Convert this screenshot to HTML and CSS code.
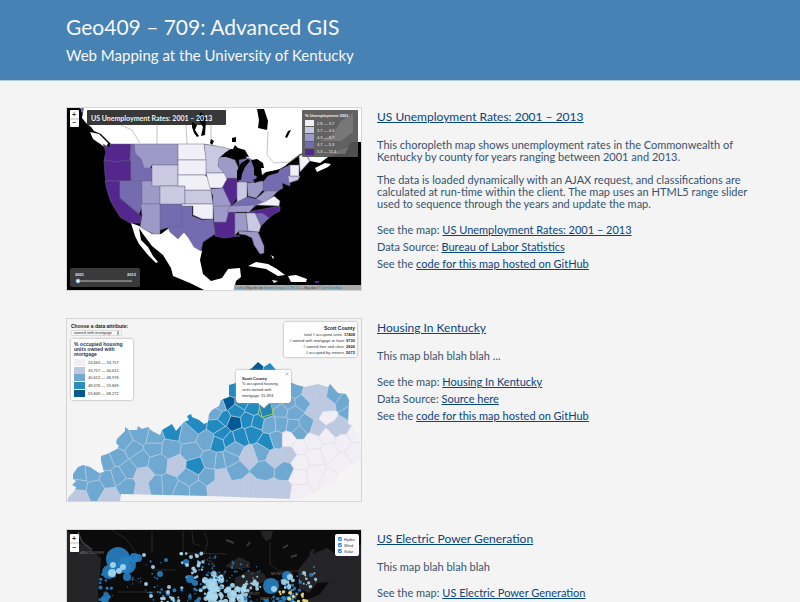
FILE: index.html
```html
<!DOCTYPE html>
<html lang="en">
<head>
<meta charset="utf-8">
<meta name="viewport" content="width=device-width, initial-scale=1">
<title>Geo409 – 709: Advanced GIS</title>
<link rel="stylesheet" href="styles.css">
</head>
<body>
<header class="site-header">
  <h1>Geo409 – 709: Advanced GIS</h1>
  <h2>Web Mapping at the University of Kentucky</h2>
</header>
<main class="projects">
  <article class="project">
    <svg class="thumb" viewBox="67 108 294 182" role="img" aria-label="US unemployment map">
      <rect x="67" y="108" width="294" height="182" fill="#000"/>
      <path fill="#fff" d="M80 108L83 112 82 118 86 123 91 127 94 131 101 134 107 140 111 144H204L216 146 222 152 231 149 239 150 245 155 248 160 254 163 261 167 262 175 266 172 278 170 285 166 292 160 300 154 306 153 310 161 320 163 328 157 338 153 346 149 352 142 361 142V108Z"/>
      <path fill="#fff" d="M315 168L325 163 331 164 328 167 317 172ZM131 223L142 227 152 234 161 234 169 228 178 237 184 232 195 245 202 251 200 260 203 274 211 281 222 278 228 269 240 268 241 277 236 281 234 290H204L190 283 173 276 171 268 163 255 152 246 143 234 139 228 141 240 148 247 153 256 158 262 156 263 148 255 139 244 135 236Z"/>
      <path fill="#fff" d="M248 266L256 262 268 264 277 269 285 275 278 276 266 269 254 267ZM288 276L296 275 307 279 306 282 291 282ZM272 280l6 1-4 2zM270 248l5 1zM271 255l3 2-1 2z"/>
      <path d="M81 108h3l-1 5-2-1z" fill="#756bb1"/>
      <path fill="#fff" d="M90 132l9 2 9 9-2 5-13-9z"/>
      <path fill="none" stroke="#aaa" stroke-width=".7" d="M121 125L132 130 140 143M157 125V144M186 125L187 144M211 125V143M268 131L267 155 274 163 290 162 302 153"/>
      <path d="M257 109l7 0 4 12-1 9-9-2 1-8zM288 131l3-1-4 8-2-1zM232 138l4-1 0 5-4 0zM211 139l3 2-2 4-2-2z"/>
      <g stroke="#686484" stroke-width=".5" stroke-linejoin="round">
        <g fill="#54278f">
          <path d="M103 144l7 4V144H131V160L115 162 104 160 106 152Z"/>
          <path d="M104 160L115 162 131 160V181H106L105 175Z"/>
          <path d="M105 181H120V198L141 216 140 223 130 223 120 217 111 202 107 190Z"/>
          <path d="M224 178H237V197L232 205 228 203 223 190Z"/>
          <path d="M214 222H225L227 212H235V235L240 236 224 238 215 236Z"/>
          <path d="M247 212L280 206 280 211 274 214 268 219 260 214Z"/>
        </g>
        <g fill="#756bb1">
          <path d="M131 144H134L135 152 141 159 144 167 152 168V181H131V162L130 159Z"/>
          <path d="M120 181H142V207L139 214 120 198Z"/>
          <path d="M160 204H182V227L166 228 160 230Z"/>
          <path d="M182 206H192V216L202 220 213 219 215 234 203 242 201 251 194 247 188 237 184 232 178 239 170 232 168 227H182Z"/>
          <path d="M239 160L249 158 256 163 255 173 257 177 254 182H239L238 176 240 168Z"/>
          <path d="M263 182L268 176 276 173 279 170 290 165V186L282 183 283 188 278 191H263Z"/>
          <path d="M232 206L238 200 248 197 256 199 264 194 265 202 254 206Z"/>
          <path d="M254 214L262 213 269 218 261 226Z"/>
        </g>
        <g fill="#9e9ac8">
          <path d="M134 144H178V165H152L150 168H144L141 159 135 153Z"/>
          <path d="M142 181H152V185H160V204H142Z"/>
          <path d="M141 204H160V234H153L140 227 142 216Z"/>
          <path d="M210 189L223 188 231 205 229 209H213V196Z"/>
          <path d="M213 206H230L226 222H214Z"/>
          <path d="M218 158L224 156 235 160 239 169 237 178H224L218 169Z"/>
          <path d="M247 183L263 181 263 190 256 198 248 196Z"/>
          <path d="M230 206L256 205 249 212H227Z"/>
          <path d="M235 213H246L248 231H239L235 235Z"/>
          <path d="M239 231L258 232 264 246 264 253 260 254 254 245 252 238 246 235 239 234Z"/>
          <path d="M256 199L265 191 278 191 273 196 265 203Z"/>
        </g>
        <g fill="#cbc9e2">
          <path d="M152 165H178V186H152Z"/><path d="M160 186H185V204H160Z"/>
          <path d="M185 190H211L213 204H185Z"/>
          <path d="M204 144L222 147 230 149 219 158 218 166 224 173H206Z"/>
          <path d="M237 182H247V197L237 202Z"/><path d="M246 213H255L261 226 259 232 248 231Z"/>
          <path d="M288 176H300L298 180 289 183Z"/>
        </g>
        <g fill="#f2f0f7">
          <path d="M178 144H204L206 160H178Z"/><path d="M178 160H206V175L178 175Z"/>
          <path d="M178 175H205L210 180 211 190H185V186H178Z"/><path d="M206 173H224L227 179 222 188H210Z"/>
          <path d="M182 204H213V219L202 219 193 215V206H182Z"/><path d="M256 205L266 201 274 196 280 201 279 206Z"/>
          <path d="M290 165H299V176H290Z"/><path d="M299 156L305 153 310 161 300 172Z"/>
        </g>
      </g>
      <path d="M221 157l5-5 6-1 3-6 3 3 7 2 4 7-8-1-6 3-8-2zM237 180l0-9 4-8 7-4 2 2-5 6-3 7-1 6zM251 160l6-1 6 4 1 5-4 0-2 9-4-2 0-7zM253 180l6-3 9-1-7 4-6 3zM266 173l10-3 4-1-2 4-10 2z"/>
      <path d="M315 281h4v2h-4z" fill="#54278f"/>
      <rect x="87" y="110" width="139" height="15" rx="1" fill="#383838"/>
      <path d="M192 122l5 3-2 5 4 6-2 1-3-4-2-6zM201 112l5 7-1 16-4 1 2-9-5-8z"/>
      <text x="91" y="121" class="map-title">US Unemployment Rates: 2001 – 2013</text>
      <g class="zoomer"><rect x="70" y="110" width="9" height="17" rx="1"/><path d="M70 119h9"/><text x="74" y="117">+</text><text x="74" y="125">−</text></g>
      <rect x="302" y="110" width="56" height="47" rx="1" fill="#555" fill-opacity=".93"/>
      <path fill="#858585" fill-opacity=".6" d="M320 141l13-7 8-13 12-8v19l-12 9-10 0zM331 154l18-7-4 7z"/>
      <text x="305" y="117" class="legend-title small light">% Unemployment 2001</text>
      <g class="legend light">
        <path fill="#f2f0f7" d="M305 120h9v6h-9z"/><path fill="#cbc9e2" d="M305 127h9v6h-9z"/><path fill="#9e9ac8" d="M305 134h9v7h-9z"/><path fill="#756bb1" d="M305 142h9v6h-9z"/><path fill="#54278f" d="M305 149h9v6h-9z"/>
        <text x="317" y="125">2.8 — 3.7</text><text x="317" y="132">3.7 — 4.3</text><text x="317" y="139">4.3 — 4.7</text><text x="317" y="146">4.7 — 5.3</text><text x="317" y="153">5.3 — 11.4</text>
      </g>
      <rect x="70" y="268" width="70" height="19" rx="2" fill="#3a3a3a"/>
      <g class="legend-title small light"><text x="75" y="276">2001</text><text x="127" y="276">2013</text></g>
      <path d="M78 281h54" stroke="#bbb"/><circle cx="78" cy="281" r="2" fill="#fff" stroke="#66a8e8"/>
      <rect x="234" y="285" width="127" height="5" fill="#aaa"/>
      <text x="235" y="289" class="credit"><tspan>Leaflet</tspan> | Map tiles by <tspan>Stamen Design</tspan>, <tspan>CC BY 3.0</tspan> — Map data © <tspan>OpenStreetMap</tspan></text>
    </svg>
    <div class="details">
      <h3><a href="#unemployment">US Unemployment Rates: 2001 – 2013</a></h3>
      <p>This choropleth map shows unemployment rates in the Commonwealth of Kentucky by county for years ranging between 2001 and 2013.</p>
      <p>The data is loaded dynamically with an AJAX request, and classifications are calculated at run-time within the client. The map uses an HTML5 range slider used to sequence through the years and update the map.</p>
      <ul>
        <li>See the map: <a href="#unemployment">US Unemployment Rates: 2001 – 2013</a></li>
        <li>Data Source: <a href="#bls">Bureau of Labor Statistics</a></li>
        <li>See the <a href="#code-1">code for this map hosted on GitHub</a></li>
      </ul>
    </div>
  </article>

  <article class="project">
    <svg class="thumb" viewBox="67 319 294 182" role="img" aria-label="Kentucky housing map">
      <rect x="67" y="319" width="294" height="182" fill="#f4f4f4"/>
      <clipPath id="state"><path d="M68 501V498L75 490 76 487 72 485 76 481 73 479 73 474 78 467 83 465 90 467 99 473 104 472 101 461 101 456 107 454 109 453 117 449 119 446 116 443 117 439 125 431 125 427 129 430 137 430 138 426 142 429 148 427 152 431 160 435 162 430 172 424 176 431 184 422 189 420 187 416 191 414 192 417 199 420 204 424 208 422 209 414 212 410 219 406 221 400 229 397 229 385 236 383 240 376 252 368 258 362 264 367 270 363 276 370 285 380 297 385 305 387 318 384 328 387 330 384 338 393 346 394 349 400 348 424 353 426 356 433 360 440 361 460 350 464 337 475 336 482 320 489 303 498 293 499 210 496 121 494 120 501Z"/></clipPath>
      <g id="counties" clip-path="url(#state)"></g>
      <path d="M259 405L271 403 273 414 262 417Z" fill="#2586b5" stroke="#a0cf3c"/>
      <text x="71" y="328" class="legend-title">Choose a data attribute:</text>
      <rect x="71.500" y="330.500" width="50" height="5" rx="1" fill="#f8f8f8" stroke="#ccc" stroke-width=".7"/>
      <g class="legend"><text x="74" y="334">owned with mortgage</text></g>
      <path d="M117 332.500l1-1.500 1 1.500zM117 333.500l1 1.500 1-1.500z" fill="#333"/>
      <rect x="71" y="339" width="62" height="61" rx="2" class="card"/>
      <g class="legend-title navy"><text x="74" y="346">% occupied housing</text><text x="74" y="351">units owned with</text><text x="74" y="356">mortgage</text></g>
      <g class="legend">
        <path fill="#f1eef6" d="M74 359h11v7H74z"/><path fill="#bdc9e1" d="M74 367h11v7H74z"/><path fill="#74a9cf" d="M74 374h11v7H74z"/><path fill="#2b8cbe" d="M74 382h11v7H74z"/><path fill="#045a8d" d="M74 390h11v7H74z"/>
        <text x="88" y="364">24,663 — 33,757</text><text x="88" y="372">33,757 — 40,612</text><text x="88" y="379">40,612 — 48,976</text><text x="88" y="387">48,976 — 59,849</text><text x="88" y="395">59,849 — 68,272</text>
      </g>
      <rect x="284" y="322" width="73" height="35" rx="2" class="card"/>
      <g class="legend end"><text x="355" y="330" class="legend-title">Scott County</text><text x="355" y="336">total # occupied units: <tspan>17408</tspan></text><text x="355" y="342"># owned with mortgage or loan: <tspan>9730</tspan></text><text x="355" y="348"># owned free and clear: <tspan>2606</tspan></text><text x="355" y="354"># occupied by renters: <tspan>5072</tspan></text></g>
      <path d="M238 370H289Q291 370 291 373V399Q291 403 288 403H269L264 408 258 403H239Q236 403 236 399V373Q236 370 238 370Z" class="card"/>
      <g class="legend"><text x="242" y="380" class="legend-title small">Scott County</text><text x="242" y="385">% occupied housing</text><text x="242" y="391">units owned with</text><text x="242" y="397">mortgage: 55.894</text></g>
      <path d="M285.500 372.500l3 3m0-3l-3 3" stroke="#999" stroke-width=".6"/>
    </svg>
    <div class="details">
      <h3><a href="#housing">Housing In Kentucky</a></h3>
      <p>This map blah blah blah ...</p>
      <ul>
        <li>See the map: <a href="#housing">Housing In Kentucky</a></li>
        <li>Data Source: <a href="#source">Source here</a></li>
        <li>See the <a href="#code-2">code for this map hosted on GitHub</a></li>
      </ul>
    </div>
  </article>

  <article class="project">
    <svg class="thumb" viewBox="67 530 294 182" role="img" aria-label="US electric power map">
      <rect x="67" y="530" width="294" height="182" fill="#0b0b0c"/>
      <path fill="#242426" d="M67 530L76 541 88 547 101 558 100 575 98 590 99 612H67ZM235 578L248 571 263 573 269 581 254 585 242 598 234 590ZM261 531l12 0-2 8-5 2-4-5zM311 550l4-1-3 7-3-1zM298 570l12-15 17-7 9 6 2-9h23v80h-80l15-20 24-11 9-12-12 1-8 10-10-5zM225 566l14-9 11 5 0 6-18 1z"/>
      <path fill="none" stroke="#333" stroke-width=".7" d="M192 531l1 12 7 3M204 532l4 10-4 12M112 530l14 9 11 15M152 531v22M183 531v25M185 553l42 1M152 570h24M117 592h48M270 542v22l9 7h25M126 554v20l15 10M210 553l4 26"/>
      <g fill="none" stroke="#3a3a3c" stroke-width="2"><path d="M78 532l4 10 10 8M283 548l5-3M291 557l6-2M247 546l3-4M226 540l8 3"/></g>
      <g class="place"><text x="79" y="554">VANCOUVER</text><text x="271" y="575">MONTREAL</text><text x="260" y="600">NEW YORK</text><text x="242" y="595">DETROIT</text></g>
      <g id="plants"></g>
      <g class="zoomer"><rect x="70" y="534" width="9" height="18" rx="1"/><path d="M70 543h9"/><text x="74" y="541">+</text><text x="74" y="550">−</text></g>
      <rect x="335" y="534" width="24" height="22" rx="2" fill="#fff"/>
      <g fill="#3b8bf0"><rect x="338" y="537" width="4" height="4" rx="1"/><rect x="338" y="543" width="4" height="4" rx="1"/><rect x="338" y="549" width="4" height="4" rx="1"/></g>
      <path fill="none" stroke="#fff" stroke-width=".7" d="M339 539l1 1 2-2M339 545l1 1 2-2M339 551l1 1 2-2"/>
      <g class="legend"><text x="344" y="541">Hydro</text><text x="344" y="547">Wind</text><text x="344" y="553">Solar</text></g>
    </svg>
    <div class="details">
      <h3><a href="#power">US Electric Power Generation</a></h3>
      <p>This map blah blah blah</p>
      <ul>
        <li>See the map: <a href="#power">US Electric Power Generation</a></li>
      </ul>
    </div>
  </article>
</main>
<script src="maps.js"></script>
</body>
</html>
```

FILE: styles.css
```css
* { box-sizing: border-box; }

body {
  margin: 0;
  background: #f4f4f4;
  color: #34536f;
  font: 11px/12px Lato, "Noto Sans", sans-serif;
}

h1, h2, h3 {
  margin: 0;
  font-weight: 400;
}

.site-header {
  padding: 11px 66px 13px;
  border-bottom: 1px solid #b3c9dc;
  background: #4682b4;
  color: #f8f8f8;
}

h1 { font-size: 21px; line-height: 32px; }
h2 { font-size: 15px; line-height: 24px; }

.projects {
  display: grid;
  gap: 27px;
  padding: 26px 52px 27px 66px;
}

.project {
  display: grid;
  grid-template-columns: 296px minmax(0, 1fr);
  gap: 15px;
  align-items: start;
}

.thumb {
  display: block;
  width: 100%;
  border: 1px solid #d5d5d5;
}

h3 { font-size: 12px; line-height: 20px; }
a { color: #08457e; text-underline-offset: 1px; }

p { margin: 11px 0; }
h3 + p { margin-top: 12px; }

ul {
  margin: 10px 0 0;
  padding: 0;
  list-style: none;
  line-height: 17px;
}

/* Lettering inside the map thumbnails */
svg text { font-family: "Liberation Sans", sans-serif; }
svg .map-title { font: 700 7px Lato, sans-serif; fill: #f2f2f2; }
.legend { font-size: 4px; fill: #333; }
.legend tspan { font-weight: 700; fill: #222; }
.legend-title { font-size: 5px; font-weight: 700; fill: #222; }
.small { font-size: 4px; }
.light, .light text { fill: #eee; }
.navy { fill: #1d3557; }
.end text { text-anchor: end; }
.credit { font-size: 3px; fill: #444; }
.credit tspan { fill: #1686b8; }
.place { font-size: 4px; fill: #777; }
.card { fill: #fff; filter: drop-shadow(0 0 1px #999); }
.zoomer rect { fill: #fff; }
.zoomer path { stroke: #bbb; }
.zoomer text { font-size: 7px; font-weight: 700; text-anchor: middle; fill: #333; }
```

FILE: maps.js
```js
const NS = "http://www.w3.org/2000/svg";

function add(parent, name, attributes) {
  const node = document.createElementNS(NS, name);
  for (const key in attributes) node.setAttribute(key, attributes[key]);
  parent.appendChild(node);
}

// County centres with their class in the five-step blue ramp.
const ramp = ["#f1eef6", "#bdc9e1", "#6fa8d1", "#218bc1", "#045a96"];
const counties = [
  [80,475,2],[79,485,2],[78,495,1],[95,488,2],[92,474,2],[108,479,2],[110,497,1],
  [106,462,2],[118,457,2],[118,476,2],[128,470,2],[127,487,2],[143,476,1],[143,490,1],
  [124,442,2],[133,449,2],[141,435,2],[140,459,2],[154,448,2],[154,438,2],[158,463,2],
  [156,487,2],[169,486,2],[170,449,2],[173,431,3],[188,434,2],[197,424,3],[191,452,2],
  [177,465,1],[195,466,3],[189,477,2],[181,491,2],[198,490,2],[207,440,2],[211,460,2],
  [208,477,2],[216,413,2],[217,426,3],[218,443,3],[216,488,1],[222,434,3],[229,440,3],
  [234,422,4],[236,411,3],[224,418,3],[248,420,3],[240,437,3],[253,433,3],[257,422,3],
  [267,442,3],[265,411,3],[234,448,2],[220,461,2],[229,459,2],[250,456,1],[261,452,2],
  [235,471,2],[264,470,2],[275,458,1],[289,454,1],[276,439,2],[285,471,2],[270,425,2],
  [281,424,2],[281,410,2],[294,413,2],[298,432,2],[306,424,2],[293,426,2],[327,417,0],
  [315,411,1],[318,428,1],[342,426,1],[334,429,1],[350,412,2],[222,477,1],[226,490,1],
  [238,489,1],[249,487,1],[260,490,1],[272,490,1],[284,490,1],[289,439,0],[299,447,0],
  [300,462,0],[298,477,0],[298,492,0],[313,442,0],[314,456,0],[316,475,0],[327,436,0],
  [330,451,0],[343,443,0],[356,434,0],[355,451,0],[340,462,0],[328,480,0],[257,367,4],
  [270,368,3],[228,402,4],[232,390,3],[242,402,3],[220,405,2],[295,391,2],[302,402,2],
  [288,403,2],[309,395,1],[320,392,1],[334,395,2],[344,402,2],[326,405,1],[275,402,2],
  [253,408,3],[262,382,3],[281,385,2],[246,390,3]
];

// Keep the part of a polygon that lies closer to a than to b.
function clipNearer(polygon, a, b) {
  const side = p => (p[0] - (a[0] + b[0]) / 2) * (b[0] - a[0]) + (p[1] - (a[1] + b[1]) / 2) * (b[1] - a[1]);
  const kept = [];
  polygon.forEach((p, i) => {
    const q = polygon[(i + 1) % polygon.length];
    const sp = side(p), sq = side(q);
    if (sp <= 0) kept.push(p);
    if (sp * sq < 0) {
      const t = sp / (sp - sq);
      kept.push([p[0] + t * (q[0] - p[0]), p[1] + t * (q[1] - p[1])]);
    }
  });
  return kept;
}

const countyLayer = document.getElementById("counties");
for (const a of counties) {
  let cell = [[60,350],[370,350],[370,510],[60,510]];
  for (const b of counties) if (a !== b) cell = clipNearer(cell, a, b);
  add(countyLayer, "polygon", {
    points: cell.map(p => p.join(",")).join(" "),
    fill: ramp[a[2]],
    stroke: a[2] ? "#b8cee3" : "#e0dfe8",
    "stroke-width": 0.6
  });
}

// Power plants: x, y, radius, kind (h hydro, w wind, s solar).
const kinds = { h: "#2680c2", w: "#a9d8f0", s: "#efe58a" };
const plantLayer = document.getElementById("plants");
const plant = (x, y, r, kind) => add(plantLayer, "circle", { cx: x, cy: y, r, fill: kinds[kind], "fill-opacity": 0.9 });

// Dense regions: centre, spread, count, largest radius, kind.
const regions = [
  [214,590,9,16,45,3,"w"],[216,576,18,15,45,1,"h"],[235,594,12,9,30,3,"w"],
  [208,567,12,13,20,1,"h"],[250,584,11,8,24,2,"w"],[245,570,17,7,14,1,"h"],
  [289,588,12,15,30,2,"h"],[300,580,16,8,20,2,"w"],[292,598,15,7,16,2,"s"],
  [108,586,8,15,20,2,"h"],[145,584,18,24,30,1,"h"],[193,572,12,20,22,2,"w"],
  [180,596,22,8,24,2,"h"],[170,600,9,3,12,2,"w"],[265,602,26,6,30,2,"h"]
];
let seed = 7;
const random = () => (seed = (seed * 16807) % 2147483647) / 2147483647;
for (const [x, y, dx, dy, count, radius, kind] of regions) {
  for (let i = 0; i < count; i++) {
    plant(x + (random() * 2 - 1) * dx, y + (random() * 2 - 1) * dy, 0.6 + random() * (radius - 0.4), kind);
  }
}
[
  [118,559,12,"h"],[109,572,7,"h"],[127,565,9,"h"],[134,558,5,"h"],[138,558,4,"h"],[127,577,4,"h"],
  [126,568,5,"h"],[113,565,3,"w"],[112,573,4,"w"],[119,571,3,"w"],[123,567,3,"w"],[105,599,4,"h"],
  [144,555,2,"w"],[153,567,2,"w"],[166,560,2,"h"],[160,574,3,"h"],[186,562,3,"h"],[187,565,2,"w"],
  [191,557,2,"w"],[197,556,2,"w"],[199,563,2,"w"],[195,571,2,"w"],[190,579,4,"h"],[195,583,3,"h"],
  [169,587,2,"w"],[168,592,2,"w"],[146,584,2,"w"],[151,596,2,"w"],[205,580,3,"w"],[212,585,6,"w"],
  [212,596,6,"w"],[232,595,5,"w"],[271,586,8,"h"],[274,589,3,"w"],[287,576,5,"h"],[290,577,3,"w"],
  [284,582,3,"w"],[304,573,2,"w"],[314,567,1,"h"],[311,575,2,"h"]
].forEach(p => plant(...p));
```
